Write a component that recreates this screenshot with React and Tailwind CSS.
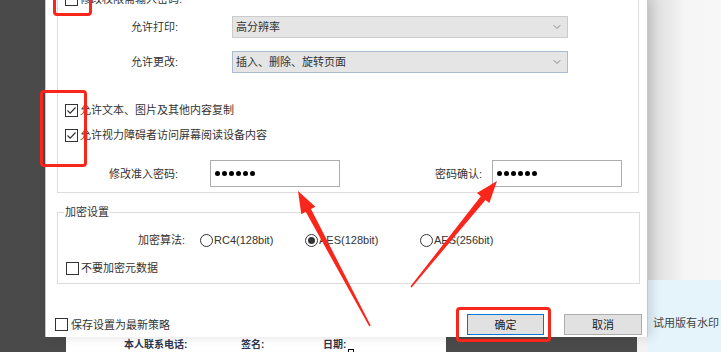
import { ChevronDown } from "lucide-react";

const font = "font-['Liberation_Sans','Noto_Sans_CJK_SC',sans-serif]";

function CheckBox({ checked }) {
  return (
    <span className="w-[13px] h-[13px] border border-[#333] bg-white flex items-center justify-center shrink-0">
      {checked && (
        <svg width="11" height="11" viewBox="0 0 11 11">
          <path d="M1.5 5.5 L4.2 8.2 L9.5 2.5" fill="none" stroke="#333" strokeWidth="1.2" />
        </svg>
      )}
    </span>
  );
}

function Radio({ checked }) {
  return (
    <span className="w-[13px] h-[13px] rounded-full border border-[#333] bg-white flex items-center justify-center shrink-0">
      {checked && <span className="w-[7px] h-[7px] rounded-full bg-[#333]" />}
    </span>
  );
}

function Select({ value, focused }) {
  return (
    <div
      className={
        "w-[336px] h-[22px] flex items-center justify-between bg-[#e5e5e5] border pl-[3px] pr-[4px] " +
        (focused ? "border-[#a9bdd2]" : "border-[#cccccc]")
      }
    >
      <span>{value}</span>
      <ChevronDown size={12} strokeWidth={1.5} color="#666" />
    </div>
  );
}

function PasswordBox() {
  return (
    <div className="w-[130px] h-[27px] border border-[#adadad] bg-white flex items-center gap-[2px] pl-[4px]">
      {[0, 1, 2, 3, 4, 5].map((i) => (
        <span key={i} className="w-[5px] h-[5px] rounded-full bg-black" />
      ))}
    </div>
  );
}

function Arrow({ x1, y1, x2, y2 }) {
  const dx = x2 - x1;
  const dy = y2 - y1;
  const len = Math.hypot(dx, dy);
  const ux = dx / len;
  const uy = dy / len;
  const px = -uy;
  const py = ux;
  const bx = x2 - ux * 22;
  const by = y2 - uy * 22;
  const pt = (x, y, w) => `${x + px * w},${y + py * w}`;
  const pts = [
    pt(x1, y1, 0.8),
    pt(bx, by, 3),
    pt(bx, by, 8),
    `${x2},${y2}`,
    pt(bx, by, -8),
    pt(bx, by, -3),
    pt(x1, y1, -0.8),
  ].join(" ");
  return <polygon points={pts} fill="#f8261b" />;
}

export default function App() {
  return (
    <div className={"relative w-[721px] h-[352px] overflow-hidden text-[11px] leading-[14px] text-[#333] " + font}>
      {/* background: document viewer + side panel */}
      <div className="flex h-full">
        <div className="w-[637px] bg-[#4a4a4a] pt-[337px] pl-[66px]">
          <div className="w-[380px] h-[15px] bg-white flex pl-[58px] pt-[2px] text-[10px] leading-[12px] font-bold text-[#2b3550]">
            <span className="w-[117px]">本人联系电话:</span>
            <span className="w-[82px]">签名:</span>
            <span>日期:</span>
            <span className="ml-[2px] mt-[10px] w-[6px] h-[6px] border border-black bg-white" />
          </div>
        </div>
        <div className="w-[11px] bg-[#f2f2f2]" />
        <div className="w-[73px] flex flex-col">
          <div className="h-[280px] bg-gradient-to-r from-[#d9d9d9] via-[#f5f5f5] to-[#f8f8f8]" />
          <div className="flex-1 bg-[#e5f3fb] pt-[36px] pl-[5px] whitespace-nowrap text-[#444]">试用版有水印</div>
        </div>
      </div>

      {/* dialog */}
      <div className="absolute left-[45px] top-0 w-[603px] h-[337px] bg-white border-x border-[#b9d49c] shadow-[4px_0_10px_rgba(0,0,0,0.12)] flex flex-col">
        <div className="ml-[11px] w-[582px] -mt-[14px] border border-[#dcdcdc] flex flex-col pb-[5px]">
          <div className="h-[24px] flex items-center pl-[7px] gap-[2px]">
            <CheckBox checked={false} />
            <span>修改权限需输入密码:</span>
          </div>
          <div className="mt-[5px] h-[22px] flex items-center">
            <span className="w-[120px] text-right">允许打印:</span>
            <div className="ml-[54px]">
              <Select value="高分辨率" />
            </div>
          </div>
          <div className="mt-[13px] h-[22px] flex items-center">
            <span className="w-[120px] text-right">允许更改:</span>
            <div className="ml-[54px]">
              <Select value="插入、删除、旋转页面" focused />
            </div>
          </div>
          <div className="mt-[27px] h-[20px] flex items-center pl-[7px] gap-[2px]">
            <CheckBox checked />
            <span>允许文本、图片及其他内容复制</span>
          </div>
          <div className="mt-[5px] h-[20px] flex items-center pl-[7px] gap-[2px]">
            <CheckBox checked />
            <span>允许视力障碍者访问屏幕阅读设备内容</span>
          </div>
          <div className="mt-[15px] h-[27px] flex items-center">
            <span className="w-[120px] text-right">修改准入密码:</span>
            <div className="ml-[32px]">
              <PasswordBox />
            </div>
            <span className="ml-[52px] w-[90px] text-right">密码确认:</span>
            <div className="ml-[10px]">
              <PasswordBox />
            </div>
          </div>
        </div>

        <div className="relative ml-[11px] w-[583px] mt-[19px] border border-[#dcdcdc] flex flex-col pt-[17px] pb-[5px]">
          <span className="absolute -top-[8px] left-[6px] bg-white px-[1px]">加密设置</span>
          <div className="h-[20px] flex items-center">
            <span className="w-[127px] text-right">加密算法:</span>
            <div className="ml-[15px] w-[105px] flex items-center gap-[1px]">
              <Radio checked={false} />
              <span>RC4(128bit)</span>
            </div>
            <div className="w-[115px] flex items-center gap-[1px]">
              <Radio checked />
              <span>AES(128bit)</span>
            </div>
            <div className="flex items-center gap-[1px]">
              <Radio checked={false} />
              <span>AES(256bit)</span>
            </div>
          </div>
          <div className="mt-[8px] h-[20px] flex items-center pl-[8px] gap-[2px]">
            <CheckBox checked={false} />
            <span>不要加密元数据</span>
          </div>
        </div>

        <div className="mt-[30px] h-[21px] flex items-center">
          <div className="ml-[9px] flex items-center gap-[3px]">
            <CheckBox checked={false} />
            <span>保存设置为最新策略</span>
          </div>
          <div className="ml-auto mr-[5px] flex gap-[20px]">
            <button className="w-[77px] h-[21px] bg-[#e1e1e1] border border-[#0078d7] text-[#222]">确定</button>
            <button className="w-[78px] h-[21px] bg-[#e1e1e1] border border-[#adadad] text-[#222]">取消</button>
          </div>
        </div>
      </div>

      {/* annotations */}
      <div className="absolute left-[53px] -top-[10px] w-[39px] h-[26px] border-[3px] border-[#f8261b] rounded-[4px]" />
      <div className="absolute left-[40px] top-[90px] w-[47px] h-[77px] border-[3px] border-[#f8261b] rounded-[4px]" />
      <div className="absolute left-[456px] top-[307px] w-[95px] h-[35px] border-[3px] border-[#f8261b] rounded-[4px]" />
      <svg className="absolute left-0 top-0" width="721" height="352">
        <Arrow x1={370} y1={326} x2={298} y2={191} />
        <Arrow x1={411} y1={287} x2={497} y2={181} />
      </svg>
    </div>
  );
}
